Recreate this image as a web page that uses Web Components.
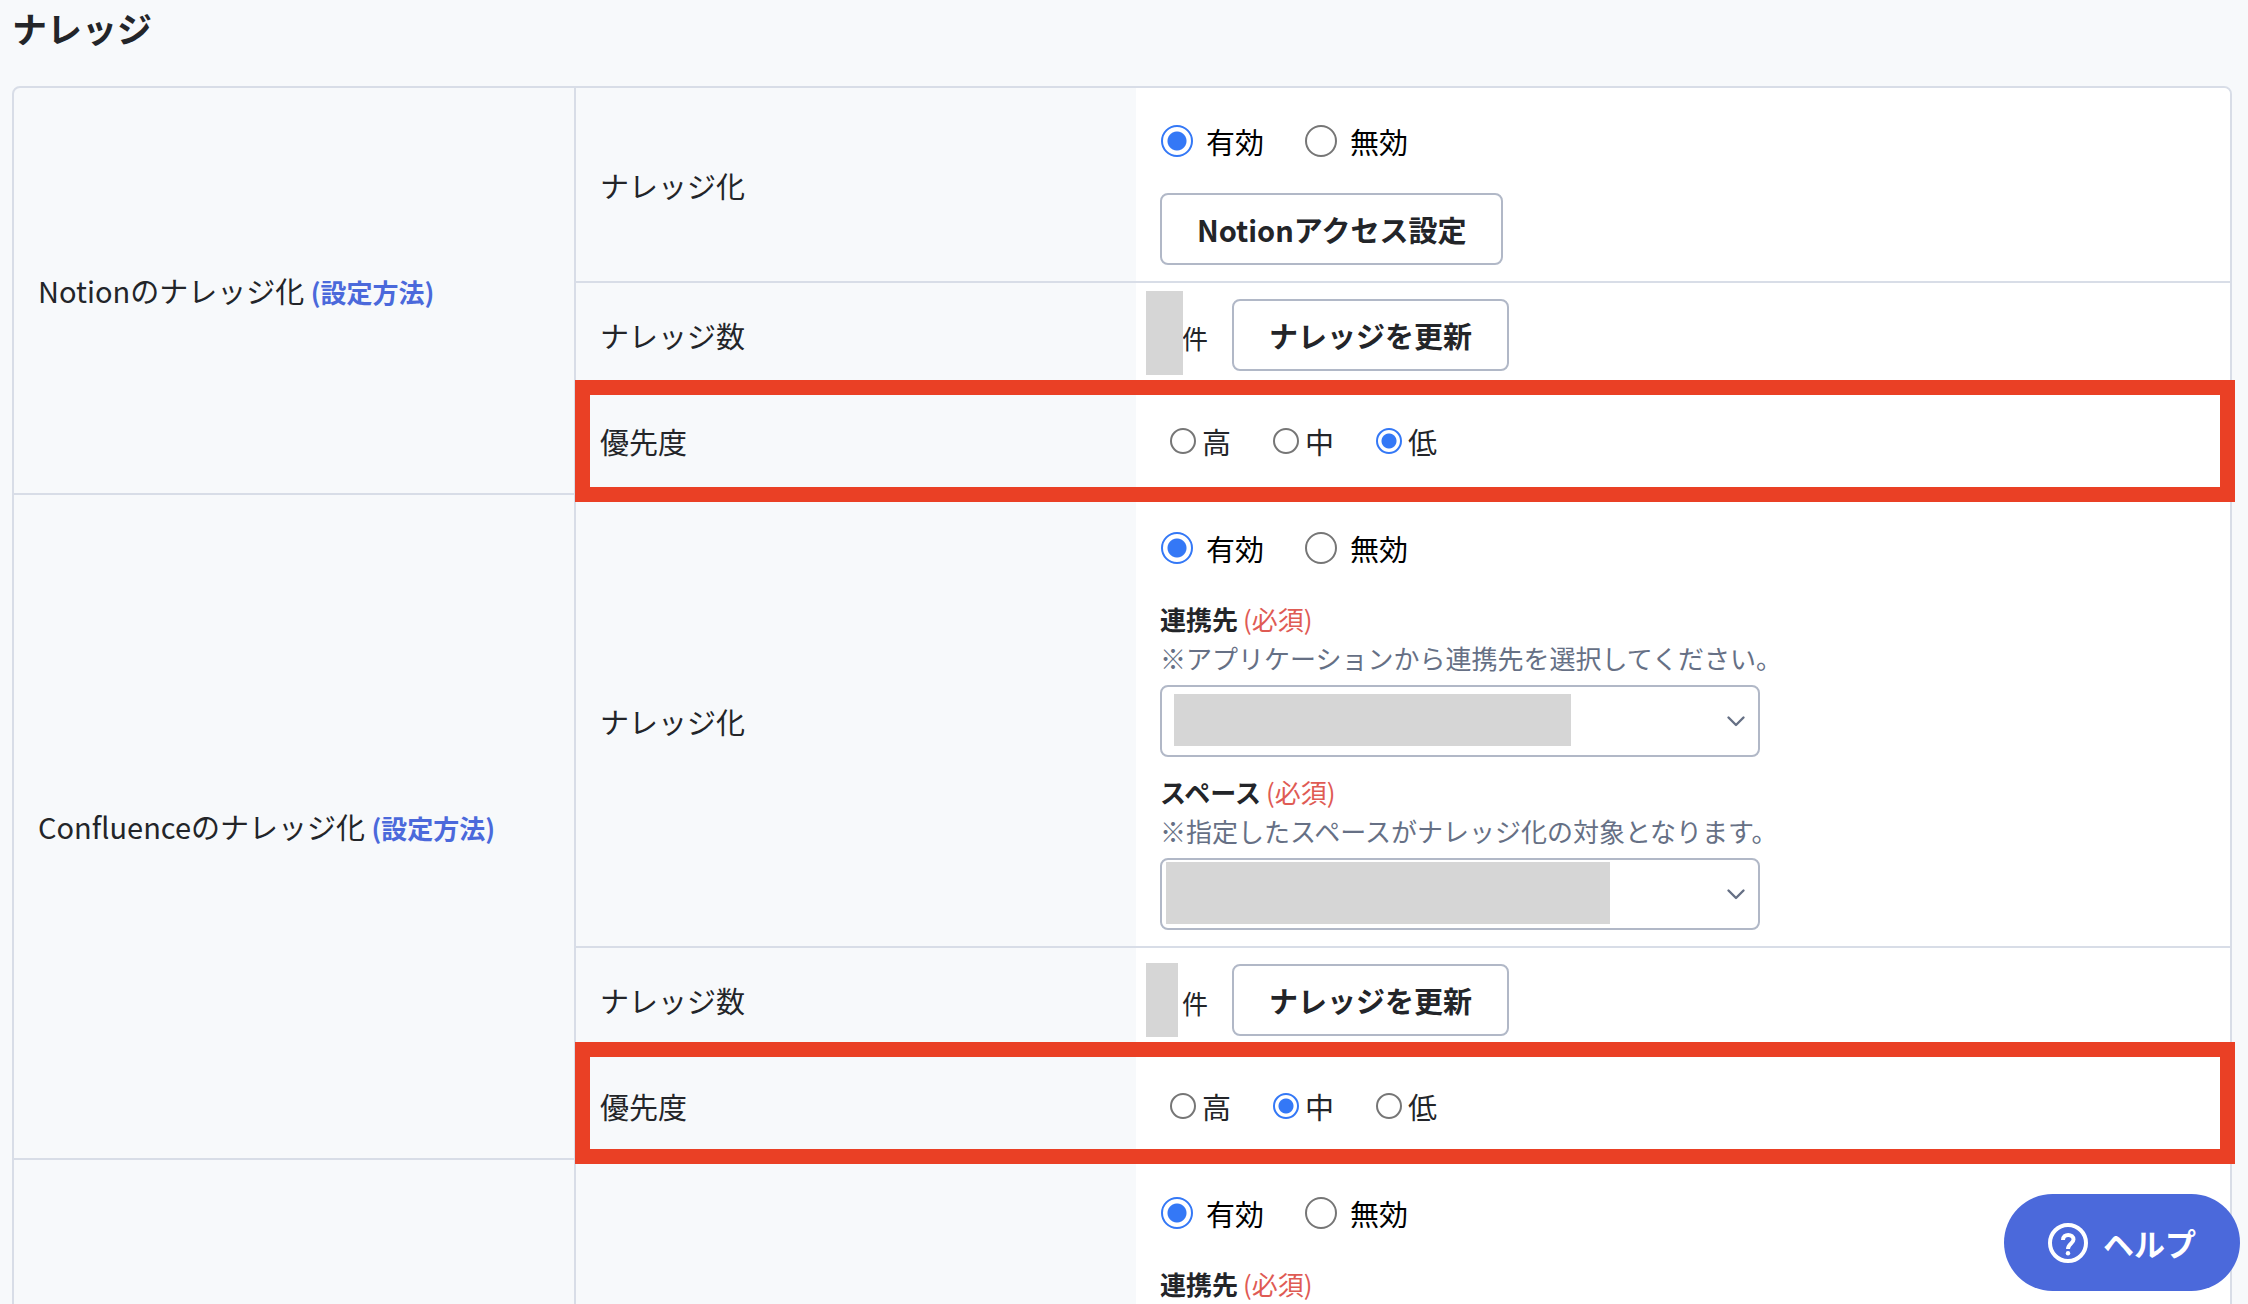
<!DOCTYPE html>
<html lang="ja">
<head>
<meta charset="utf-8">
<title>ナレッジ</title>
<style>
  :root {
    --line: #d8dde7;
    --control: #b1b8c7;
    --surface: #f7f9fb;
    --ink: #232529;
    --muted: #667085;
    --accent: #4b69db;
    --blue: #3478f6;
    --danger: #df5b54;
    --mask: #d6d6d6;
    --mark: #ea4025;
  }
  html, body { height: 100%; }
  body {
    margin: 0;
    overflow: hidden;
    background: var(--surface);
    color: var(--ink);
    font: 400 29px/44px "Noto Sans CJK JP", "Noto Sans", sans-serif;
  }
</style>
</head>
<body>
<knowledge-page></knowledge-page>
<help-button>ヘルプ</help-button>

<script>
const define = (name, html, setup) => {
  const template = document.createElement('template');
  template.innerHTML = html;
  customElements.define(name, class extends HTMLElement {
    connectedCallback() {
      if (this.shadowRoot) return;
      this.attachShadow({ mode: 'open' }).append(template.content.cloneNode(true));
      if (setup) setup(this, this.shadowRoot);
    }
  });
};

define('radio-choice', `
  <style>
    :host { display: block; }
    fieldset { display: flex; align-items: center; gap: 41px; height: 73px; margin: 0; padding: 0 0 0 1px; border: 0; color: #000; }
    label { display: flex; align-items: center; gap: 13px; }
    input { appearance: none; box-sizing: border-box; width: 32px; height: 32px; margin: 0; border: 2px solid #767676; border-radius: 50%; background: #fff; }
    input:checked { border-color: var(--blue); background: radial-gradient(circle, var(--blue) 9px, #fff 10px); }
    :host([compact]) fieldset { gap: 42px; height: 72px; padding-left: 10px; color: inherit; }
    :host([compact]) label { gap: 6px; }
    :host([compact]) input { width: 26px; height: 26px; }
    :host([compact]) input:checked { background: radial-gradient(circle, var(--blue) 7px, #fff 8px); }
  </style>
  <fieldset></fieldset>`, (host, root) => {
  const set = root.querySelector('fieldset');
  set.setAttribute('aria-label', host.getAttribute('label'));
  host.getAttribute('options').split(',').forEach((text) => {
    const label = document.createElement('label');
    const input = document.createElement('input');
    input.type = 'radio';
    input.name = 'choice';
    input.checked = text === host.getAttribute('value');
    label.append(input, text);
    set.append(label);
  });
});

define('outline-button', `
  <style>
    :host { display: block; }
    button { display: block; padding: 12px 35px; border: 2px solid var(--control); border-radius: 8px; background: #fff; color: inherit; font: inherit; font-weight: 700; white-space: nowrap; cursor: pointer; }
  </style>
  <button type="button"><slot></slot></button>`);

define('knowledge-count', `
  <style>
    :host { display: flex; align-items: center; }
    .number { position: relative; width: 22px; height: 72px; }
    .number::before { content: ""; position: absolute; inset: -8px -1px -4px -14px; background: var(--mask); }
    :host([short]) .number::before { inset: -1px 4px -1px -14px; }
    .unit { margin-right: 24px; padding-top: 5px; font-size: 26px; }
  </style>
  <span class="number"></span><span class="unit">件</span>
  <outline-button>ナレッジを更新</outline-button>`);

define('required-label', `
  <style>
    :host { display: block; font-size: 26px; line-height: 38px; white-space: nowrap; }
    label { font-weight: 700; }
    .required { margin-left: 5px; color: var(--danger); font-weight: 400; }
  </style>
  <label><slot></slot><span class="required">(必須)</span></label>`);

define('select-field', `
  <style>
    :host { display: block; margin-top: 16px; font-size: 26px; white-space: nowrap; }
    label { display: block; line-height: 38px; font-weight: 700; }
    .required { margin-left: 5px; color: var(--danger); font-weight: 400; }
    p { margin: 0 0 8px; color: var(--muted); line-height: 39px; }
    .box { position: relative; width: 600px; }
    select { appearance: none; display: block; box-sizing: border-box; width: 100%; height: 72px; padding: 0 56px 0 24px; border: 2px solid var(--control); border-radius: 8px; background: #fff; color: inherit; font: inherit; }
    .mask { position: absolute; inset: 9px 189px 11px 14px; background: var(--mask); pointer-events: none; }
    :host([wide]) .mask { inset: 4px 150px 6px 6px; }
    svg { position: absolute; top: 28px; right: 14px; pointer-events: none; }
  </style>
  <label for="target"><slot></slot><span class="required">(必須)</span></label>
  <p id="hint"></p>
  <div class="box">
    <select id="target" aria-describedby="hint"></select>
    <span class="mask"></span>
    <svg width="20" height="16" viewBox="0 0 20 16" fill="none" stroke="#667085" stroke-width="2.4" stroke-linecap="round" stroke-linejoin="round"><path d="M2.5 4.5 10 12l7.500-7.500"/></svg>
  </div>`, (host, root) => {
  root.querySelector('p').textContent = host.getAttribute('hint');
});

define('guide-link', `
  <style>
    :host { display: inline; }
    a { color: var(--accent); font-size: 26px; font-weight: 700; text-decoration: none; }
  </style>
  <a href="#guide"><slot></slot></a>`);

define('help-button', `
  <style>
    :host { position: fixed; right: 8px; bottom: 13px; }
    button { display: flex; align-items: center; gap: 15px; height: 97px; padding: 0 44px; border: 0; border-radius: 49px; background: var(--accent); color: #fff; font: inherit; font-size: 31px; font-weight: 700; cursor: pointer; }
  </style>
  <button type="button">
    <svg width="40" height="40" viewBox="0 0 40 40" fill="none" stroke="#fff" stroke-width="4"><circle cx="20" cy="20" r="18"/><path d="M15 17c0-7 10.500-6.500 10.500-.5 0 4-5.500 4-5.500 9.500"/><circle cx="20" cy="30.200" r="2.200" fill="#fff" stroke="none"/></svg>
    <slot></slot>
  </button>`);

define('knowledge-table', `
  <style>
    :host { display: block; --item: 560px; }
    table { width: 100%; table-layout: fixed; border: 2px solid var(--line); border-radius: 8px; border-spacing: 0; }
    .group { width: 562px; }
    .item { width: var(--item); }
    th, td { box-sizing: border-box; padding: 16px 24px; border-bottom: 2px solid var(--line); text-align: left; vertical-align: middle; font-weight: 400; }
    td { background: #fff; }
    tr:first-child td { border-top-right-radius: 6px; }
    th[scope=rowgroup] { border-right: 2px solid var(--line); }
    .marked td { position: relative; }
    .marked td::after { content: ""; position: absolute; inset: -9px -5px -9px calc(-1px - var(--item)); border: 15px solid var(--mark); pointer-events: none; }
    .marked.last td::after { top: -12px; bottom: -6px; }
    tr.more { height: 400px; }
    tr.more td { vertical-align: top; }
    outline-button { width: max-content; margin-top: 16px; }
    required-label { margin-top: 16px; }
  </style>
  <table aria-label="ナレッジ">
    <colgroup><col class="group"><col class="item"><col></colgroup>
    <tbody>
      <tr>
        <th scope="rowgroup" rowspan="3">Notionのナレッジ化 <guide-link>(設定方法)</guide-link></th>
        <th scope="row">ナレッジ化</th>
        <td><radio-choice label="ナレッジ化" options="有効,無効" value="有効"></radio-choice><outline-button>Notionアクセス設定</outline-button></td>
      </tr>
      <tr><th scope="row">ナレッジ数</th><td><knowledge-count></knowledge-count></td></tr>
      <tr class="marked"><th scope="row">優先度</th><td><radio-choice compact label="優先度" options="高,中,低" value="低"></radio-choice></td></tr>
    </tbody>
    <tbody>
      <tr>
        <th scope="rowgroup" rowspan="3">Confluenceのナレッジ化 <guide-link>(設定方法)</guide-link></th>
        <th scope="row">ナレッジ化</th>
        <td>
          <radio-choice label="ナレッジ化" options="有効,無効" value="有効"></radio-choice>
          <select-field hint="※アプリケーションから連携先を選択してください。">連携先</select-field>
          <select-field wide hint="※指定したスペースがナレッジ化の対象となります。">スペース</select-field>
        </td>
      </tr>
      <tr><th scope="row">ナレッジ数</th><td><knowledge-count short></knowledge-count></td></tr>
      <tr class="marked last"><th scope="row">優先度</th><td><radio-choice compact label="優先度" options="高,中,低" value="中"></radio-choice></td></tr>
    </tbody>
    <tbody>
      <tr class="more">
        <th scope="rowgroup"></th>
        <th scope="row"></th>
        <td><radio-choice label="ナレッジ化" options="有効,無効" value="有効"></radio-choice><required-label>連携先</required-label></td>
      </tr>
    </tbody>
  </table>`);

define('knowledge-page', `
  <style>
    :host { display: block; height: 100%; overflow: hidden; padding: 0 16px 0 12px; box-sizing: border-box; }
    h2 { margin: 0 0 30px; font-size: 35px; line-height: 56px; font-weight: 700; }
  </style>
  <h2>ナレッジ</h2>
  <knowledge-table></knowledge-table>`);
</script>
</body>
</html>
